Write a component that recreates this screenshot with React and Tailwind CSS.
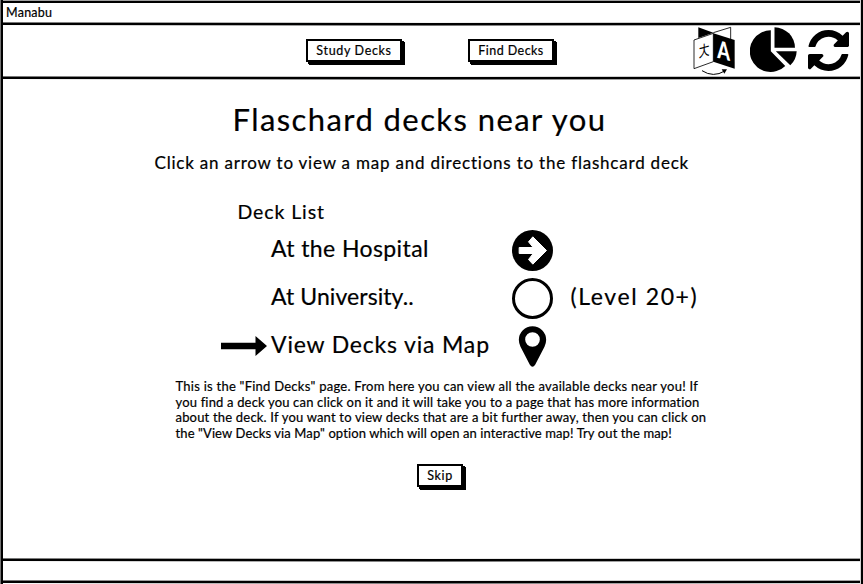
function Rule() {
  return (
    <div className="shrink-0">
      <div className="h-px bg-linear-to-r from-neutral-500 via-neutral-100 to-neutral-400" />
      <div className="h-0.5 bg-black" />
      <div className="h-px bg-linear-to-r from-white via-neutral-500 to-neutral-200" />
    </div>
  );
}

function SketchButton({ children, className }) {
  return (
    <button
      className={
        "flex h-[23px] items-center justify-center border-2 border-black bg-white pt-0.5 text-[12.5px] leading-none whitespace-nowrap shadow-[2px_2px_0_#000,3px_3px_0_#000] " +
        className
      }
    >
      {children}
    </button>
  );
}

function TranslateIcon() {
  return (
    <svg viewBox="36 78 132 150" className="h-[50px] w-11">
      <path d="M55 82L100 98L55 114Z" />
      <path d="M100 98L152 82V117" fill="none" stroke="#000" strokeWidth="2.5" />
      <path d="M42 120L100 100V185L42 206Z" fill="#fff" stroke="#000" strokeWidth="2.5" />
      <path d="M100 100L164 120V206L100 185Z" />
      <text
        transform="matrix(0.95 -0.26 0 1.4 72 180)"
        textAnchor="middle"
        className="font-['Noto_Sans_CJK_KR',sans-serif] text-[54px] font-light [-webkit-text-stroke:0]"
      >
        ㅊ
      </text>
      <text
        transform="matrix(0.78 0.2 0 1.05 131 178)"
        textAnchor="middle"
        fill="#fff"
        className="font-['Lato',sans-serif] text-[70px] font-black [-webkit-text-stroke:0]"
      >
        A
      </text>
      <path d="M66 212Q100 234 134 213" fill="none" stroke="#000" strokeWidth="3" />
      <path d="M125 208L141 208L133 221Z" />
    </svg>
  );
}

function PieIcon() {
  return (
    <svg viewBox="210 81 140 134" className="h-[45px] w-[47px]">
      <path d="M272 91V153L315 197A62 62 0 1 1 272 91Z" />
      <path d="M283 82A61 61 0 0 1 344 143H283Z" />
      <path d="M287 153H349A61 61 0 0 1 330 195Z" />
    </svg>
  );
}

function RefreshIcon() {
  return (
    <svg viewBox="0 0 1536 1536" className="size-[41px]">
      <path d="M1511 928q0 5-1 7-64 268-268 434.500t-478 166.500q-146 0-282.500-55t-243.500-157l-129 129q-19 19-45 19t-45-19-19-45v-448q0-26 19-45t45-19h448q26 0 45 19t19 45-19 45l-137 137q71 66 161 102t187 36q134 0 250-65t186-179q11-17 53-117 8-23 30-23h192q13 0 22.500 9.500t9.500 22.500zm25-800v448q0 26-19 45t-45 19h-448q-26 0-45-19t-19-45 19-45l138-138q-148-137-349-137-134 0-250 65t-186 179q-11 17-53 117-8 23-30 23h-199q-13 0-22.500-9.500t-9.500-22.500v-7q65-268 270-434.500t480-166.500q146 0 284 55.500t245 156.500l130-129q19-19 45-19t45 19 19 45z" />
    </svg>
  );
}

function ArrowCircle() {
  return (
    <svg viewBox="34.500 30.500 123 123" className="size-[41px]">
      <circle cx="96" cy="92" r="61.500" />
      <path
        fill="#fff"
        stroke="#fff"
        strokeWidth="3"
        strokeLinejoin="round"
        d="M56 83H98L84 66L97 51L138 92L97 133L84 119L98 101H56Z"
      />
    </svg>
  );
}

function MapPin() {
  return (
    <svg viewBox="34.500 318.500 123 123" className="size-[41px]">
      <path
        fillRule="evenodd"
        d="M55 360a41 41 0 0 1 82 0q0 10-5 21L104 435q-8 12-16 0L60 381q-5-11-5-21ZM96 337a22 22 0 1 0 0 44a22 22 0 1 0 0-44Z"
      />
    </svg>
  );
}

function PointerArrow() {
  return (
    <svg viewBox="0 0 46 20" className="mt-1 h-5 w-[46px]">
      <path d="M0 6.700H34.500V0L46 10L34.500 20V13.300H0Z" />
    </svg>
  );
}

function DeckRow({ pointer, label, labelClass, icon, note }) {
  return (
    <li className="flex h-12 items-center text-[23px] leading-[48px] whitespace-nowrap">
      <div className="w-[50px]">{pointer}</div>
      <div className={"w-[240.500px] " + labelClass}>{label}</div>
      <div className="w-[59px] pt-[5px]">{icon}</div>
      <div className="tracking-[1.600px]">{note}</div>
    </li>
  );
}

export default function App() {
  return (
    <div className="flex h-[584px] w-[863px] flex-col border-r-2 border-l border-r-black border-l-neutral-500 bg-white font-['Lato',sans-serif] text-black [-webkit-text-stroke:0.2px_#000]">
      <div className="flex grow flex-col border-r border-l-2 border-r-neutral-300 border-l-black">
        <div className="h-[3px] shrink-0 border-t border-neutral-400 bg-black" />
        <div className="h-[19px] shrink-0 pl-[3px] text-[12.500px] leading-[19px] tracking-[0.250px]">
          Manabu
        </div>
        <Rule />
        <header className="flex h-[50px] shrink-0">
          <div className="flex grow pt-[13px] pl-[303px]">
            <SketchButton className="w-24 tracking-[0.660px]">Study Decks</SketchButton>
            <SketchButton className="ml-[66px] w-[86px] tracking-[0.450px]">Find Decks</SketchButton>
          </div>
          <div className="flex pr-[11px]">
            <TranslateIcon />
            <div className="ml-[14px] pt-px">
              <PieIcon />
            </div>
            <div className="ml-[11px] pt-1">
              <RefreshIcon />
            </div>
          </div>
        </header>
        <Rule />
        <main className="flex h-[478px] shrink-0 flex-col pt-[21px]">
          <h1 className="pl-[229.500px] text-[31px] leading-9 tracking-[1.420px]">
            Flaschard decks near you
          </h1>
          <p className="mt-[16px] pl-[151.500px] text-[17px] leading-5 tracking-[0.790px]">
            Click an arrow to view a map and directions to the flashcard deck
          </p>
          <h2 className="mt-[27px] pl-[234.500px] text-[19.500px] leading-6 tracking-[0.900px]">Deck List</h2>
          <ul className="pl-[218px]">
            <DeckRow label="At the Hospital" labelClass="tracking-[0.400px]" icon={<ArrowCircle />} />
            <DeckRow
              label="At University.."
              labelClass="tracking-[0.080px]"
              icon={<div className="size-[41px] rounded-full border-3 border-black" />}
              note="(Level 20+)"
            />
            <DeckRow
              pointer={<PointerArrow />}
              label="View Decks via Map"
              labelClass="tracking-[0.820px]"
              icon={<MapPin />}
            />
          </ul>
          <p className="mt-[11px] pl-[172.500px] text-[13px] leading-[15.700px] whitespace-nowrap">
            <span className="block tracking-[0.250px]">
              This is the "Find Decks" page. From here you can view all the available decks near you! If
            </span>
            <span className="block tracking-[0.170px]">
              you find a deck you can click on it and it will take you to a page that has more information
            </span>
            <span className="block tracking-[0.190px]">
              about the deck. If you want to view decks that are a bit further away, then you can click on
            </span>
            <span className="block tracking-[0.110px]">
              the "View Decks via Map" option which will open an interactive map! Try out the map!
            </span>
          </p>
          <div className="mt-[22px] flex pl-[414px]">
            <SketchButton className="w-[46px] tracking-[0.660px]">Skip</SketchButton>
          </div>
        </main>
        <Rule />
        <footer className="h-[18px] shrink-0" />
        <Rule />
      </div>
    </div>
  );
}
